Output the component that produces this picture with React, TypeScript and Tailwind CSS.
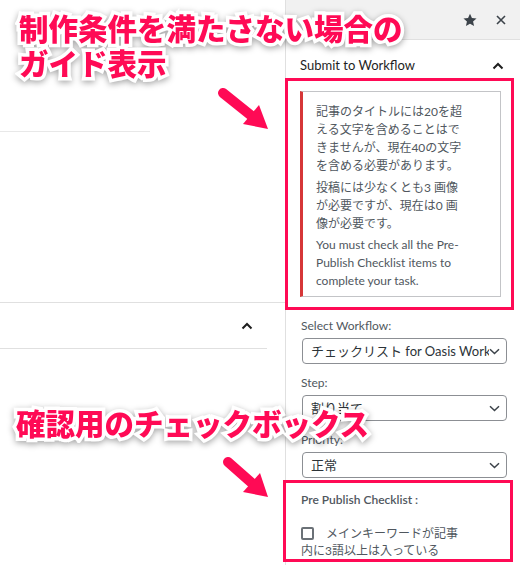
import React from 'react';

const ChevronUp: React.FC = () => (
  <svg width="12" height="8" viewBox="0 0 12 8" fill="none">
    <path d="M1.5 6.5L6 2l4.5 4.5" stroke="#1e1e1e" strokeWidth="2" />
  </svg>
);

const ChevronDown: React.FC = () => (
  <svg width="11" height="7" viewBox="0 0 11 7" fill="none">
    <path d="M1 1.2l4.5 4.3L10 1.2" stroke="#3c434a" strokeWidth="1.5" />
  </svg>
);

const Select: React.FC<{ value: string }> = ({ value }) => (
  <div className="ml-px w-[205px] h-[26px] border border-[#8c8f94] rounded-[4px] flex items-center pl-[8px] pr-[6px] bg-white">
    <span className="flex-1 overflow-hidden whitespace-nowrap text-[13px] text-[#2c3338] leading-[16px]">{value}</span>
    <ChevronDown />
  </div>
);

const FieldLabel: React.FC<{ children: React.ReactNode }> = ({ children }) => (
  <div className="text-[12px] leading-[16px] text-[#50575e] mb-[4px]">{children}</div>
);

const Callout: React.FC<{ className: string; children: React.ReactNode }> = ({ className, children }) => (
  <div
    className={`absolute font-['Noto_Sans_CJK_JP',sans-serif] font-black text-[29.5px] leading-[35px] text-[#ff0a55] whitespace-nowrap [-webkit-text-stroke:7px_white] [paint-order:stroke_fill] drop-shadow-[0_2px_3px_rgba(0,0,0,0.35)] ${className}`}
  >
    {children}
  </div>
);

export default function App() {
  return (
    <div className="relative w-[520px] h-[565px] overflow-hidden bg-white flex font-['Lato','Noto_Sans_CJK_JP',sans-serif]">
      {/* editor area */}
      <div className="w-[285px] flex flex-col">
        <div className="h-[131px]" />
        <div className="w-[150px] h-px bg-[#e8e8e8]" />
        <div className="h-[170px]" />
        <div className="h-px bg-[#e0e0e0]" />
        <div className="h-[45px] flex items-center justify-end pr-[32px]">
          <ChevronUp />
        </div>
        <div className="w-[267px] h-px bg-[#e0e0e0]" />
      </div>

      {/* sidebar */}
      <div className="w-[235px] border-l border-[#e0e0e0] flex flex-col">
        <div className="h-[40px] bg-[#f1f1f1] border-b border-[#e0e0e0] flex items-center justify-end pr-[14px] gap-[18px]">
          <svg width="16" height="16" viewBox="0 0 24 24">
            <path d="M12 2.5l2.9 6.4 6.9.7-5.2 4.6 1.5 6.8L12 17.5 5.9 21l1.5-6.8-5.2-4.6 6.9-.7z" fill="#3c434a" />
          </svg>
          <svg width="10" height="10" viewBox="0 0 10 10">
            <path d="M1 1l8 8M9 1l-8 8" stroke="#3c434a" strokeWidth="1.6" />
          </svg>
        </div>

        <div className="h-[51px] flex items-center justify-between pl-[14px] pr-[16px]">
          <span className="text-[13px] text-[#1e1e1e]">Submit to Workflow</span>
          <ChevronUp />
        </div>

        <div className="ml-[14px] w-[201px] border border-[#c3c4c7] border-l-[3px] border-l-[#d63638] pt-[11px] pb-[6px] pl-[13px] text-[12px] leading-[18px] text-[#50575e] whitespace-nowrap">
          <p>
            記事のタイトルには20を超<br />
            える文字を含めることはで<br />
            きませんが、現在40の文字<br />
            を含める必要があります。
          </p>
          <p className="mt-[4px]">
            投稿には少なくとも3 画像<br />
            が必要ですが、現在は0 画<br />
            像が必要です。
          </p>
          <p className="mt-[3px]">
            You must check all the Pre-<br />
            Publish Checklist items to<br />
            complete your task.
          </p>
        </div>

        <div className="pl-[15px] pt-[21px]">
          <FieldLabel>Select Workflow:</FieldLabel>
          <Select value="チェックリスト for Oasis Workflow" />
          <div className="h-[11px]" />
          <FieldLabel>Step:</FieldLabel>
          <Select value="割り当て" />
          <div className="h-[11px]" />
          <FieldLabel>Priority:</FieldLabel>
          <Select value="正常" />

          <div className="mt-[14px] text-[12px] leading-[16px] font-semibold text-[#50575e]">Pre Publish Checklist :</div>
          <div className="mt-[17px] w-[180px] text-[12px] leading-[17px] text-[#50575e]">
            <span className="inline-block align-[-2px] w-[13px] h-[13px] border-2 border-[#6b7177] rounded-[2px] mr-[12px]" />
            メインキーワードが記事<br />
            内に3語以上は入っている
          </div>
        </div>
      </div>

      {/* annotation boxes */}
      <div className="absolute left-[285px] top-[78px] w-[229px] h-[232px] border-[3px] border-[#ff0a55]" />
      <div className="absolute left-[283px] top-[480px] w-[230px] h-[82px] border-[3px] border-[#ff0a55]" />

      {/* arrows */}
      <svg className="absolute left-0 top-0 pointer-events-none" width="520" height="565" viewBox="0 0 520 565">
        <line x1="223" y1="93" x2="253" y2="117" stroke="#ff0a55" strokeWidth="10" strokeLinecap="round" />
        <polygon points="268,129 259,105 243,124" fill="#ff0a55" />
        <line x1="228" y1="462" x2="254" y2="485" stroke="#ff0a55" strokeWidth="10" strokeLinecap="round" />
        <polygon points="268,497 260,473 243,492" fill="#ff0a55" />
      </svg>

      <Callout className="left-[19px] top-[10px]">
        制作条件を満たさない場合の<br />
        ガイド表示
      </Callout>
      <Callout className="left-[16px] top-[405px]">確認用のチェックボックス</Callout>
    </div>
  );
}
